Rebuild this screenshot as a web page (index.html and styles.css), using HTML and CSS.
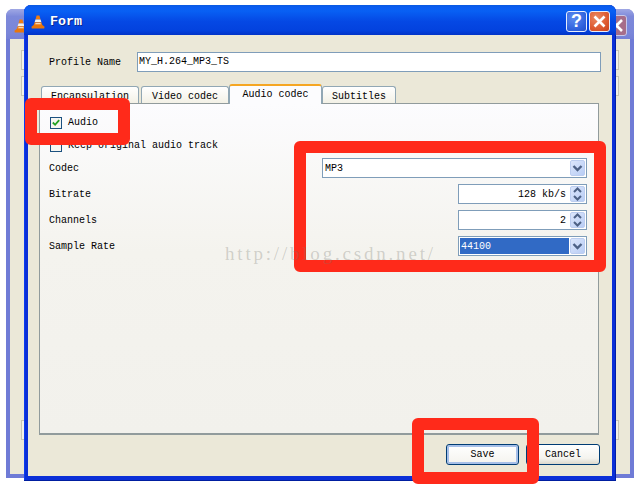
FILE: index.html
```html
<!DOCTYPE html>
<html lang="en">
<head>
<meta charset="utf-8">
<title>Form</title>
<link rel="stylesheet" href="styles.css">
</head>
<body>
<svg class="defs" width="0" height="0" aria-hidden="true">
  <defs>
    <symbol id="cone" viewBox="0 0 16 16">
      <path d="M6.4 .5h3.2l1.3 4.5H5.1z" fill="#f07c10"/>
      <path d="M5.1 5h5.8l1 3.2H4.1z" fill="#f4f1ea"/>
      <path d="M4.1 8.2h7.8l1 3.3H3.1z" fill="#f07c10"/>
      <path d="M5.2 9.2h5.6l.4 1.4H4.8z" fill="#f8d8b0"/>
      <path d="M.5 13.4 3 11.5h10l2.5 1.9-.4 2H.9z" fill="#e8760c"/>
    </symbol>
    <symbol id="down" viewBox="0 0 15 17">
      <path d="M3.5 6 7.5 10 11.5 6" fill="none" stroke="#4d6185" stroke-width="2.4"/>
    </symbol>
    <symbol id="up-s" viewBox="0 0 15 8">
      <path d="M4 6 7.5 2.5 11 6" fill="none" stroke="#4d6185" stroke-width="2"/>
    </symbol>
    <symbol id="down-s" viewBox="0 0 15 8">
      <path d="M4 2 7.5 5.5 11 2" fill="none" stroke="#4d6185" stroke-width="2"/>
    </symbol>
  </defs>
</svg>

<main class="desktop">
  <section class="window window-back">
    <header class="back-title">
      <svg class="cone"><use href="#cone"/></svg>
      <span class="back-close">
        <svg viewBox="0 0 21 21" width="21" height="21"><path d="M5 5 16 16M16 5 5 16" stroke="#fff" stroke-width="2.6"/></svg>
      </span>
    </header>
    <div class="back-body">
      <div class="back-col">
        <span class="back-field"></span>
        <span class="back-field"></span>
        <span class="back-spacer"></span>
        <span class="back-field"></span>
      </div>
    </div>
  </section>

  <section class="window window-front">
    <header class="titlebar">
      <svg class="cone"><use href="#cone"/></svg>
      <h1 class="title">Form</h1>
      <button class="cap cap-help" type="button">?</button>
      <button class="cap cap-close" type="button">
        <svg viewBox="0 0 21 21" width="21" height="21"><path d="M5.5 5.5 15.5 15.5M15.5 5.5 5.5 15.5" stroke="#fff" stroke-width="2.6"/></svg>
      </button>
    </header>

    <div class="client">
      <div class="profile-row">
        <label class="profile-label">Profile Name</label>
        <div class="field profile-input">MY_H.264_MP3_TS</div>
      </div>

      <nav class="tabs">
        <span class="tab tab-enc">Encapsulation</span>
        <span class="tab tab-video">Video codec</span>
        <span class="tab tab-active">Audio codec</span>
        <span class="tab tab-sub">Subtitles</span>
      </nav>

      <div class="panel">
        <div class="check-row check-audio">
          <span class="check checked">
            <svg viewBox="0 0 11 11" width="11" height="11"><path d="M2 5.5 4.5 8 9 2.8" fill="none" stroke="#21a121" stroke-width="2"/></svg>
          </span>
          <span>Audio</span>
        </div>
        <div class="check-row check-keep">
          <span class="check"></span>
          <span>Keep original audio track</span>
        </div>

        <div class="form-grid">
          <span class="form-label">Codec</span>
          <div class="field combo combo-wide">
            <span class="value">MP3</span>
            <span class="arrow"><svg width="15" height="17"><use href="#down"/></svg></span>
          </div>

          <span class="form-label">Bitrate</span>
          <div class="field spin">
            <span class="value value-right">128 kb/s</span>
            <span class="arrow arrow-spin">
              <svg width="15" height="8"><use href="#up-s"/></svg>
              <svg width="15" height="8"><use href="#down-s"/></svg>
            </span>
          </div>

          <span class="form-label">Channels</span>
          <div class="field spin">
            <span class="value value-right">2</span>
            <span class="arrow arrow-spin">
              <svg width="15" height="8"><use href="#up-s"/></svg>
              <svg width="15" height="8"><use href="#down-s"/></svg>
            </span>
          </div>

          <span class="form-label">Sample Rate</span>
          <div class="field combo spin">
            <span class="value value-selected">44100</span>
            <span class="arrow"><svg width="15" height="17"><use href="#down"/></svg></span>
          </div>
        </div>
      </div>

      <div class="actions">
        <button class="btn btn-default" type="button">Save</button>
        <button class="btn" type="button">Cancel</button>
      </div>
    </div>
  </section>

  <div class="watermark">http://blog.csdn.net/</div>

  <div class="mark mark-audio"></div>
  <div class="mark mark-fields"></div>
  <div class="mark mark-save"></div>
</main>
</body>
</html>
```

FILE: styles.css
```css
* { box-sizing: border-box; }

html, body {
  margin: 0;
  padding: 0;
  background: #fff;
}

body {
  width: 641px;
  height: 487px;
  overflow: hidden;
  font-family: "Liberation Mono", monospace;
  font-size: 10px;
  line-height: 12px;
  color: #000;
}

.defs { position: absolute; }

.desktop {
  position: relative;
  width: 641px;
  height: 487px;
}

/* windows on the desktop */
.window {
  position: absolute;
  display: flex;
  flex-direction: column;
}

.window-back {
  left: 6px;
  top: 9px;
  width: 628px;
  height: 469px;
  background: #6f7bd6;
  border-radius: 7px 7px 0 0;
  padding: 0 4px 4px;
}

.back-title {
  height: 30px;
  margin: 0 -4px;
  flex: none;
  display: flex;
  align-items: center;
  justify-content: space-between;
  padding: 3px 6px 0 8px;
  border-radius: 7px 7px 0 0;
  background: linear-gradient(#a0a8e4, #7d89da 25%, #7a86d9 80%, #7580d6);
}

.back-close {
  width: 21px;
  height: 21px;
  margin-right: 1px;
  display: block;
  border: 1px solid #c6c8ea;
  border-radius: 3px;
  background: #a66d8a;
}
.back-close svg { display: block; margin: -1px; }

.back-body {
  flex: 1;
  background: #ebe8d8;
  padding: 11px 0 0;
}

.back-col {
  display: flex;
  flex-direction: column;
  gap: 6px;
  padding: 0 11px;
}

.back-field {
  display: block;
  height: 20px;
  border: 1px solid #c8c6b4;
  background: #f4f2e8;
}
.back-spacer { height: 312px; }

.window-front {
  left: 24px;
  top: 5px;
  width: 592px;
  height: 476px;
  background: #0a2fd8;
  border-radius: 7px 7px 0 0;
  padding: 0 4px 4px;
  border-bottom: 1px solid #001ea0;
  box-shadow: inset 1px 0 0 #0a3cf0, inset -1px 0 0 #001ea8;
}

.titlebar {
  flex: none;
  height: 30px;
  margin: 0 -4px;
  display: flex;
  align-items: center;
  padding: 3px 6px 0 7px;
  border-radius: 7px 7px 0 0;
  background: linear-gradient(#0a5ae0, #0a5cf2 8%, #0860f4 20%, #0548e4 55%, #0342de 85%, #0234c8);
}

.cone {
  width: 14px;
  height: 14px;
  flex: none;
}

.title {
  flex: 1;
  margin: 0 0 0 5px;
  font-family: "Liberation Mono", monospace;
  font-size: 13.3px;
  line-height: 14px;
  font-weight: 700;
  color: #fff;
  text-shadow: 1px 1px 0 #0a2a90;
}

.cap {
  width: 21px;
  height: 21px;
  padding: 0;
  border: 1px solid #e8eefc;
  border-radius: 3px;
  display: flex;
  align-items: center;
  justify-content: center;
}
.cap svg { display: block; margin: -1px; }

.cap-help {
  margin-right: 2px;
  background: radial-gradient(circle at 35% 30%, #5d8cf0, #2d5fdc 70%, #2450c8);
  color: #fff;
  font-family: "Liberation Sans", sans-serif;
  font-size: 18px;
  font-weight: 700;
}

.cap-close {
  background: radial-gradient(circle at 35% 30%, #ec8a62, #dd5a30 60%, #c8421e);
}

.client {
  flex: 1;
  background: #ebe8d8;
  padding: 17px 11px 0;
  min-height: 0;
  display: flex;
  flex-direction: column;
}

.profile-row {
  display: flex;
  align-items: center;
  height: 20px;
  padding-left: 10px;
}

.profile-label { width: 88px; flex: none; padding-top: 1px; }

.field {
  border: 1px solid #7f9db9;
  background: #fff;
  display: flex;
  align-items: center;
}

.profile-input {
  width: 464px;
  height: 20px;
  margin-right: -2px;
  padding-left: 1px;
}

.tabs {
  display: flex;
  align-items: flex-end;
  height: 20px;
  margin-top: 12px;
  margin-bottom: -1px;
  padding-left: 2px;
  position: relative;
  z-index: 1;
}

.tab {
  height: 17px;
  margin-bottom: 1px;
  padding-top: 4px;
  display: flex;
  align-items: center;
  justify-content: center;
  border: 1px solid #91a7b4;
  border-bottom: 0;
  border-radius: 3px 3px 0 0;
  background: linear-gradient(#fff, #f3f1e6);
}

.tab-enc { width: 98px; margin-right: 2px; }
.tab-video { width: 88px; }
.tab-active {
  width: 93px;
  height: 20px;
  margin-bottom: 0;
  padding-top: 0;
  background: #fcfcfe;
  border: 1px solid #91a7b4;
  border-top: 2px solid #f5a623;
  border-bottom: 0;
}
.tab-sub { width: 74px; }

.panel {
  flex: none;
  height: 332px;
  width: 560px;
  border: 1px solid #919b9c;
  border-bottom-width: 2px;
  background: linear-gradient(#fcfcfe, #f4f3ee 45%, #f2f1ec);
  padding: 12px 10px 0;
}

.check-row {
  display: flex;
  align-items: center;
  gap: 6px;
  height: 13px;
  margin-bottom: 10px;
}

.check {
  width: 12px;
  height: 12px;
  flex: none;
  border: 1px solid #1c5180;
  background: #f6f6f2;
  display: flex;
  align-items: center;
  justify-content: center;
}

.form-grid {
  display: grid;
  grid-template-columns: 1fr 129px;
  grid-auto-rows: 20px;
  row-gap: 6px;
  margin: -4px 1px 0 -1px;
  align-items: center;
}

.form-label { grid-column: 1; padding-top: 2px; }

.combo-wide {
  grid-column: 1 / -1;
  grid-row: 1;
  justify-self: end;
  width: 265px;
}
.form-label:first-child { grid-row: 1; }

.combo, .spin { height: 20px; padding: 1px; }
.spin { grid-column: 2; }

.value {
  flex: 1;
  min-width: 0;
  padding: 2px 0 0 1px;
}
.value-right { text-align: right; padding-right: 3px; }
.value-selected {
  height: 100%;
  background: #316ac5;
  color: #fff;
  display: flex;
  align-items: center;
}

.arrow {
  width: 15px;
  height: 16px;
  flex: none;
  margin-left: 1px;
  border-radius: 2px;
  border: 1px solid #bccdf0;
  background: linear-gradient(135deg, #dce6fb, #b9cdf5);
  display: flex;
  align-items: center;
  justify-content: center;
  overflow: hidden;
}
.arrow svg { display: block; flex: none; }

.arrow-spin { flex-direction: column; }

.actions {
  display: flex;
  justify-content: flex-end;
  gap: 7px;
  margin-top: 9px;
  width: 561px;
}

.btn {
  width: 74px;
  height: 21px;
  padding: 0;
  border: 1px solid #003c74;
  border-radius: 3px;
  background: linear-gradient(#fff, #f4f3ee 70%, #dcd8cc);
  font: inherit;
  color: #000;
}

.btn-default {
  width: 73px;
  box-shadow: inset 0 0 0 2px #a6bfe8;
  background: linear-gradient(#fff, #f4f3ee);
}

/* overlays */
.watermark {
  position: absolute;
  left: 225px;
  top: 244px;
  font-family: "Liberation Serif", serif;
  font-size: 19px;
  line-height: 20px;
  letter-spacing: 2.8px;
  color: rgba(120, 120, 110, 0.3);
  white-space: nowrap;
  z-index: 3;
}

.mark {
  position: absolute;
  border: 12px solid #ff2a1a;
  border-radius: 6px;
  z-index: 2;
}
.mark-audio { left: 25px; top: 98px; width: 105px; height: 47px; }
.mark-fields { left: 294px; top: 141px; width: 312px; height: 131px; }
.mark-save { left: 412px; top: 418px; width: 127px; height: 66px; }
```
